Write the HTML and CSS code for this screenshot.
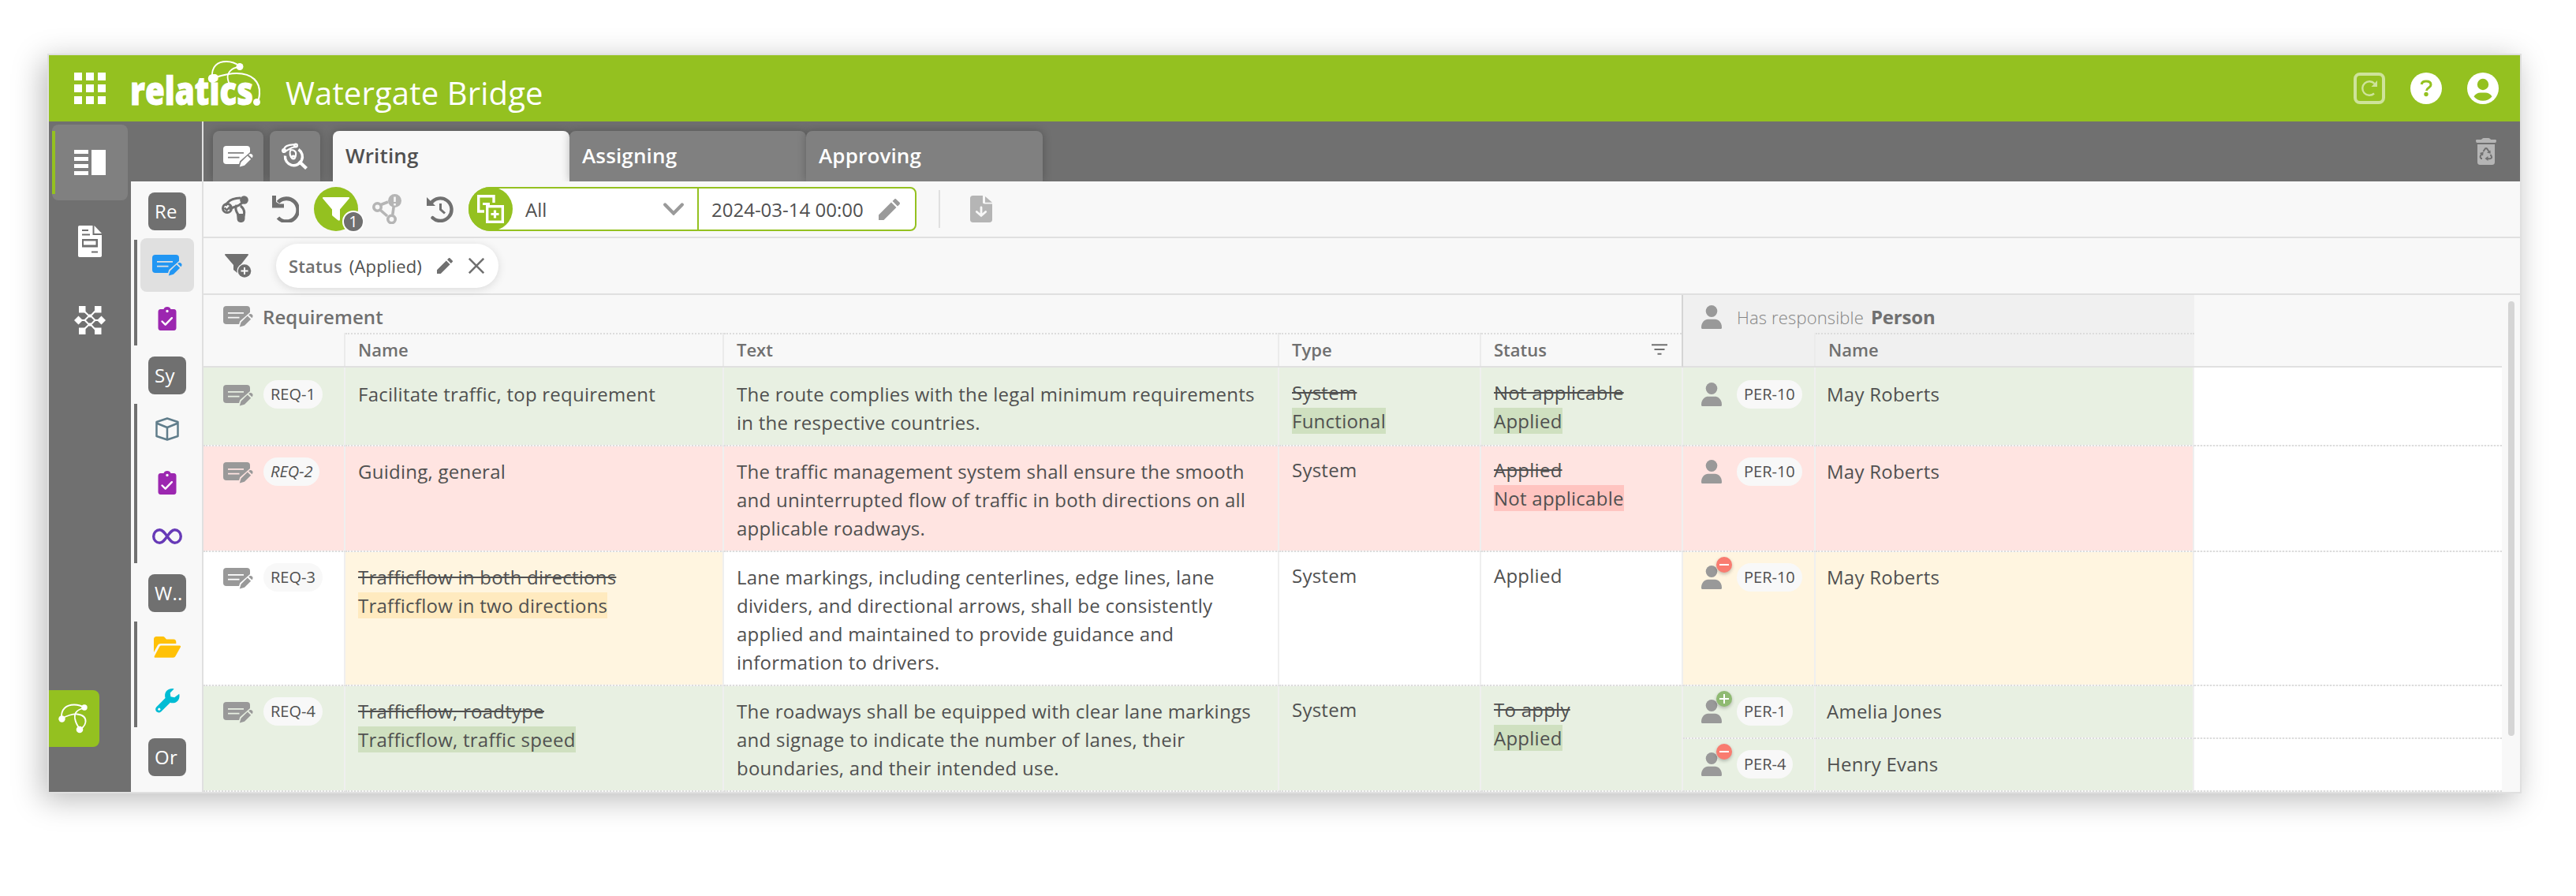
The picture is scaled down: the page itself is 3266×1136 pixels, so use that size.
FILE: index.html
```html
<!DOCTYPE html>
<html lang="en">
<head>
    <meta charset="UTF-8">
    <meta name="viewport" content="width=device-width, initial-scale=1.0">
    <title>Watergate Bridge</title>
    <link rel="stylesheet" href="styles.css">
</head>
<body>
    <!-- Shared icons -->
    <svg class="sprite" aria-hidden="true">
        <mask id="note-cut">
            <rect width="38" height="27" fill="#fff"/>
            <path d="M6 8.8H26M6 14.6H20.5" stroke="#000" stroke-width="1.8"/>
            <path d="M20.5 27l2-7L35 9l5 3-13 15z" fill="#000" stroke="#000" stroke-width="3"/>
        </mask>
        <symbol id="note" viewBox="0 0 38 27">
            <rect width="34" height="23" rx="4" fill="currentColor" mask="url(#note-cut)"/>
            <path d="M20.8 26.6l1.8-6.2 8.2-8 4.3 4.3-8.1 8.1zM32.2 11.2c1.5-1.6 3.2-1.6 4.4-.5 1.3 1.2 1.4 2.9-.2 4.6z" fill="currentColor"/>
        </symbol>
        <symbol id="person" viewBox="0 0 26 30">
            <ellipse cx="13" cy="7.5" rx="7.3" ry="7.5" fill="currentColor"/>
            <path d="M0 28C0 21.500 4.500 17.700 8.500 17.700H17.500C21.500 17.700 26 21.500 26 28C26 29.500 25.500 30 24.500 30H1.500C.5 30 0 29.500 0 28z" fill="currentColor"/>
        </symbol>
        <symbol id="clip" viewBox="0 0 24 30">
            <path fill-rule="evenodd" fill="currentColor" d="M3.500 3H7.500C8 1.200 9.800 0 12 0s4 1.200 4.500 3h4C22.500 3 23.500 4.500 23.500 6.500v20c0 2-1 3.500-3 3.500h-17c-2 0-3-1.500-3-3.500v-20C.5 4.500 1.500 3 3.500 3zM12 3.800a1.700 1.700 0 1 0 0 3.400 1.700 1.700 0 0 0 0-3.400z"/>
            <path d="M5.500 18.500l4.200 4.200 8.200-8.500" fill="none" stroke="#fff" stroke-width="2.400" stroke-linecap="round" stroke-linejoin="round"/>
        </symbol>
        <symbol id="pencil" viewBox="0 0 20 20">
            <path d="M0 20v-4.800L11.800 3.400l4.800 4.800L4.800 20zM13 2.200L14.900.3c.5-.4 1-.4 1.500 0l3.300 3.300c.4.500.4 1 0 1.500L17.800 7z" fill="currentColor"/>
        </symbol>
    </svg>

    <div class="app">
        <header class="header">
            <svg class="apps" viewBox="0 0 40 40" fill="#fff">
                <path d="M0 0h10v10H0zM15 0h10v10H15zM30 0h10v10H30zM0 15h10v10H0zM15 15h10v10H15zM30 15h10v10H30zM0 30h10v10H0zM15 30h10v10H15zM30 30h10v10H30z"/>
            </svg>
            <svg class="logo" viewBox="0 0 170 64">
                <text class="logo-text" x="-1" y="57" textLength="156" lengthAdjust="spacingAndGlyphs">relatics</text>
                <g fill="none" stroke="#fff" stroke-width="1.800">
                    <path d="M103 22C102 8 110 2 121 2c7 0 12 2 17 6"/>
                    <path d="M137 9c-10 1-16 8-14 16 1 6 4 9 8 11"/>
                    <path d="M104 23c10-3 18-6 30-6 20 0 30 11 29 26-.3 5-1 8-3 10" stroke-width="2.200"/>
                </g>
                <circle cx="103.300" cy="23.500" r="5.500" fill="#fff"/>
                <circle cx="138" cy="8.500" r="4.500" fill="#fff"/>
                <circle cx="159.500" cy="53.500" r="4.500" fill="#fff"/>
            </svg>
            <h1 class="title">Watergate Bridge</h1>
            <div class="header-icons">
                <svg class="icon-40" viewBox="0 0 40 40" opacity=".55">
                    <rect x="2" y="2" width="36" height="36" rx="6" fill="none" stroke="#fff" stroke-width="4"/>
                    <path d="M26 26.500A8.800 8.800 0 1 1 26.500 14" fill="none" stroke="#fff" stroke-width="2.400"/>
                    <path d="M30 10v8h-7.500z" fill="#fff"/>
                </svg>
                <svg class="icon-40" viewBox="0 0 40 40">
                    <circle cx="20" cy="20" r="20" fill="#fff"/>
                    <path d="M14.200 15c.3-3 2.500-4 5.800-4 4 0 6 1.700 6 4.400 0 3.900-5.500 3.700-5.500 7.600" fill="none" stroke="#94c120" stroke-width="3"/>
                    <circle cx="20" cy="27.500" r="2.700" fill="#94c120"/>
                </svg>
                <svg class="icon-40" viewBox="0 0 40 40">
                    <circle cx="20" cy="20" r="20" fill="#fff"/>
                    <circle cx="20" cy="15" r="7.200" fill="#94c120"/>
                    <path d="M8.500 30.500c2-3.500 5-5 8.500-5h6c3.500 0 6.500 1.500 8.500 5-3 3.500-7 5.200-11.500 5.200s-8.500-1.700-11.500-5.200z" fill="#94c120"/>
                </svg>
            </div>
        </header>

        <div class="body">
            <nav class="sidebar">
                <div class="side-item active">
                    <svg width="40" height="32" viewBox="0 0 40 32" fill="#fff"><path d="M0 0h18v5H0zM0 9h18v5H0zM0 18h18v5H0zM0 27h18v5H0zM22 0h18v32H22z"/></svg>
                </div>
                <div class="side-item">
                    <svg width="30" height="40" viewBox="0 0 30 40">
                        <path fill="#fff" fill-rule="evenodd" d="M2 0h16.500v12H30v26c0 1.300-.7 2-2 2H2c-1.300 0-2-.7-2-2V2C0 .7.700 0 2 0zM5 5v2h8V5zM5 10.500v2h10v-2zM5 17v10.500h20V17zm2 2.500h15.500v5H7zM17 32.500v2h8v-2zM20.500 0L30 10h-9.500z"/>
                    </svg>
                </div>
                <div class="side-item">
                    <svg width="40" height="36" viewBox="0 0 40 36">
                        <path d="M10 4l10 9.500 9-9.500M10 32l10-9.500 9 9.500M5 18h8.500L20 11.500l6.500 6.500H35M13.500 18l6.500 6.500 6.500-6.500" fill="none" stroke="#fff" stroke-width="2"/>
                        <path d="M6 0h8.500v8.500H6zM26 0h8.500v8.500H26zM6 27.500h8.500V36H6zM26 27.500h8.500V36H26zM0 18l5.500-5.500L11 18l-5.500 5.500zM29 18l5.500-5.500L40 18l-5.500 5.500z" fill="#fff"/>
                    </svg>
                </div>
                <div class="side-tab">
                    <svg width="38" height="38" viewBox="0 0 38 38">
                        <g fill="none" stroke="#fff" stroke-width="1.800">
                            <path d="M4 19C3 7 10 1.500 20 1.500c5 0 9 1 13 4"/>
                            <path d="M33 5.500C23 8 20 12 21 19c1 6 3 9 6 13"/>
                            <path d="M4 19c8-4 14-6 20-5.500 8 1 11 5 10.500 10-.5 5-3.500 6-6.500 10"/>
                        </g>
                        <circle cx="4.500" cy="19.500" r="4.200" fill="#fff"/>
                        <circle cx="33" cy="5" r="3.700" fill="#fff"/>
                        <circle cx="27" cy="33" r="4.300" fill="#fff"/>
                    </svg>
                </div>
            </nav>

            <nav class="subnav">
                <div class="label">Re</div>
                <div class="group">
                    <div class="sub-item selected"><svg class="note blue"><use href="#note"/></svg></div>
                    <div class="sub-item"><svg class="clip"><use href="#clip"/></svg></div>
                </div>
                <div class="label">Sy</div>
                <div class="group">
                    <div class="sub-item">
                        <svg width="32" height="30" viewBox="0 0 32 30" fill="none" stroke="#607d8b" stroke-width="2.500" stroke-linejoin="round"><path d="M16 1.500L29.500 6v18L16 28.500 2.500 24V6zM2.500 7.500L16 13l13.500-5.500M16 13v15.500"/></svg>
                    </div>
                    <div class="sub-item"><svg class="clip"><use href="#clip"/></svg></div>
                    <div class="sub-item">
                        <svg width="38" height="20" viewBox="0 0 38 20" fill="none" stroke="#673ab7" stroke-width="3.400"><path d="M19 10C15.500 5 13 1.700 9.500 1.700a7.800 8.300 0 0 0 0 16.600C13 18.300 15.500 15 19 10s6-8.300 9.500-8.300a7.800 8.300 0 0 1 0 16.600C25 18.300 22.500 15 19 10z"/></svg>
                    </div>
                </div>
                <div class="label">W..</div>
                <div class="group">
                    <div class="sub-item">
                        <svg width="34" height="27" viewBox="0 0 34 27" fill="#ffc107"><path d="M0 20V3.500C0 1.200 1.200 0 3.500 0h8c1 0 1.800.4 2.500 1.200l2 2.300h9c2.200 0 3.300 1.200 3.300 3.500V9H9C7 9 5.800 9.700 5 11zM1 24.500l6-11.300c.6-1.200 1.300-1.700 2.500-1.700h23c1.500 0 1.900.9 1.200 2.200l-6 10.800c-.8 1.500-1.700 2.200-3.200 2.200H2C.5 26.700.3 25.800 1 24.500z"/></svg>
                    </div>
                    <div class="sub-item">
                        <svg width="31" height="31" viewBox="0 0 31 31"><path d="M30.200 6.800c1.300 5-1.200 10.700-7 11.400-1.700.3-3 .1-4.300-.4L7.300 29.300c-4 3.500-9.200-1.200-6.300-5.600L12.600 12C10.300 5 16.200-1.300 23.600.4L18.700 5.500l.7 4.800 4.800 1z" fill="#00bcd4"/><circle cx="4.800" cy="26.200" r="1.600" fill="#f8f8f8"/></svg>
                    </div>
                </div>
                <div class="label">Or</div>
            </nav>

            <main class="main">
                <div class="tabs">
                    <div class="tab tab-icon"><svg class="note white"><use href="#note"/></svg></div>
                    <div class="tab tab-icon">
                        <svg width="34" height="34" viewBox="0 0 34 34" fill="none" stroke="#fff">
                            <path d="M4.500 16.500a11 11 0 1 0 17-8" stroke-width="3.400"/>
                            <path d="M22 23.500l9.500 9" stroke-width="4.200"/>
                            <path d="M2.500 10.500C3 5 8 1.500 18 2.500M4 11c4-1 6-5 14-6M12 8c-3 5-1 10 2 12M12 9c5 0 8 3 5 10" stroke-width="2.200"/>
                            <circle cx="3" cy="10" r="1.800" stroke-width="2.500"/><circle cx="18" cy="3.500" r="1.800" stroke-width="2.500"/><circle cx="15" cy="18.500" r="1.800" stroke-width="2.500"/>
                        </svg>
                    </div>
                    <div class="tab tab-text current">Writing</div>
                    <div class="tab tab-text">Assigning</div>
                    <div class="tab tab-text">Approving</div>
                    <svg class="trash" width="26" height="34" viewBox="0 0 26 34">
                        <path d="M0 3.500C0 2.500.6 2 1.500 2H7c1-1.400 2-2 4-2h4c2 0 3 .6 4 2h5.500c.9 0 1.500.5 1.500 1.500S25.400 6 24.500 6h-23C.6 6 0 4.500 0 3.500zM2 8h22v22.500c0 2.300-1 3.500-3.500 3.500h-15C3 34 2 32.800 2 30.500z" fill="#b5b5b5"/>
                        <path d="M9.500 17l2-3c1-1.200 2-1.200 3 0l2 3M6 26H8c-2 0-3-1.500-2-3.500l1.800-3M18.500 21l1.200 2c1 1.700 0 3.200-2 3.200h-4" fill="none" stroke="#707070" stroke-width="2"/>
                        <path d="M14 18.500l4.500-3 .2 4.200zM4.800 19l5-1.500-.8 5zM15.500 23v6l-4-3z" fill="#707070"/>
                    </svg>
                </div>

                <div class="toolbar">
                    <svg width="34" height="34" viewBox="0 0 34 34" fill="none" stroke="#707070" stroke-width="3">
                        <path d="M5 13C8 6 14 3 24 3M10 18c5-6 10-2 16-9M19 12c-3 6 1 10 3 14M24 13c5 4 6 9 3 15"/>
                        <circle cx="7" cy="16" r="5.500"/><path d="M3.500 15.500l3 3 5.500-6" stroke-width="2.500"/>
                        <circle cx="28.500" cy="5.500" r="5.300" fill="#707070" stroke="none"/><path d="M19 23h10.500v5.500c0 3.300-1.500 5.500-5 5.500s-5-2.200-5-5.500z" fill="#707070" stroke="none"/>
                    </svg>
                    <svg class="t-undo" width="34" height="34" viewBox="0 0 34 34">
                        <path d="M7.500 8.500A14.500 14.500 0 1 1 7.500 28" fill="none" stroke="#707070" stroke-width="4.800"/>
                        <path d="M0 0h5v8l4 2.500h6v5H0z" fill="#707070"/>
                    </svg>
                    <div class="filter-on">
                        <svg width="34" height="30" viewBox="0 0 34 30"><path d="M1 0h32c1.200 0 1.300 1 .7 1.800L22 15.500V28c0 2-1.500 2.300-2.800 1L13 24c-.7-.6-1-1-1-2v-6.500L.3 1.800C-.3 1-.2 0 1 0z" fill="#fff"/></svg>
                        <span class="count">1</span>
                    </div>
                    <svg class="t-link" width="37" height="38" viewBox="0 0 37 38" fill="none" stroke="#b5b5b5" stroke-width="3.600">
                        <path d="M11 13.500l9-3.500M10.500 20.500l8.500 7.500M25.800 26l1.500-11"/>
                        <circle cx="6.500" cy="16.500" r="4.700"/><circle cx="24.500" cy="32" r="4.700"/>
                        <circle cx="28.500" cy="8.500" r="8.500" fill="#b5b5b5" stroke="none"/><path d="M28.500 3.500v6.500M28.500 12v2.500" stroke="#f8f8f8" stroke-width="2.600"/>
                    </svg>
                    <svg class="t-history" width="34" height="34" viewBox="0 0 34 34" fill="none" stroke="#707070">
                        <path d="M5.500 9.500A14.300 14.300 0 1 1 7.500 28.200" stroke-width="4.400" stroke-linecap="round"/>
                        <path d="M0 2v11h11z" fill="#707070" stroke-width="0"/><path d="M17.500 10v7.500l5.500 5" stroke-width="3"/>
                    </svg>
                    <div class="combo">
                        <div class="combo-icon">
                            <svg width="34" height="36" viewBox="0 0 34 36" fill="none" stroke="#fff" stroke-width="3.400">
                                <path d="M21 10V1.700H1.700V21H9"/><path d="M7 11.500h9" stroke-width="3"/>
                                <rect x="12.700" y="14.700" width="19.600" height="19.600"/><path d="M17.500 24.500h10M22.500 19.500v10" stroke-width="3.200"/>
                            </svg>
                        </div>
                        <div class="combo-value">All
                            <svg width="26" height="16" viewBox="0 0 26 16" fill="none" stroke="#9a9a9a" stroke-width="4.200" stroke-linecap="round"><path d="M2.200 2.500L13 13.500l10.800-11"/></svg>
                        </div>
                        <div class="combo-date">2024-03-14 00:00 <svg class="pencil-lg"><use href="#pencil"/></svg></div>
                    </div>
                    <div class="separator"></div>
                    <svg width="28" height="34" viewBox="0 0 28 34">
                        <path d="M3.500 0H16v8c0 1.800.7 2.500 2.500 2.500H28v20c0 2-1.300 3.500-3.500 3.500h-21C1.300 34 0 32.500 0 30.500v-27C0 1.500 1.300 0 3.500 0zM19 1l9 7.700h-9z" fill="#b5b5b5"/>
                        <path d="M14 15v10M8.300 20.500l5.700 5 5.700-5" fill="none" stroke="#f8f8f8" stroke-width="2.800" stroke-linecap="round"/>
                    </svg>
                </div>

                <div class="filterbar">
                    <svg width="34" height="30" viewBox="0 0 34 30">
                        <path d="M1 0h28c1 0 1.200.8.700 1.600L20 14v11l-3.500-.5L11 20v-6L.3 1.600C-.2.8 0 0 1 0z" fill="#707070"/>
                        <circle cx="25" cy="21.500" r="9.500" fill="#f8f8f8"/><circle cx="25" cy="21.500" r="8.300" fill="#707070"/><path d="M20.500 21.500h9M25 17v9" stroke="#fff" stroke-width="1.900"/>
                    </svg>
                    <div class="chip"><b>Status</b><span>(Applied)</span>
                        <svg class="pencil-sm"><use href="#pencil"/></svg>
                        <svg width="20" height="20" viewBox="0 0 20 20" stroke="#707070" stroke-width="2.600"><path d="M.8.8l18.400 18.400M19.200.8L.8 19.200"/></svg>
                    </div>
                </div>

                <div class="content">
                    <div class="grid">
                        <div class="head-left">
                            <div class="head-title"><svg class="note"><use href="#note"/></svg>Requirement</div>
                            <div class="head-cols">
                                <div class="th"></div>
                                <div class="th dotted">Name</div>
                                <div class="th dotted">Text</div>
                                <div class="th dotted">Type</div>
                                <div class="th dotted last">Status
                                    <svg width="20" height="14" viewBox="0 0 20 14" stroke="#707070" stroke-width="2"><path d="M0 1.200h20M3.500 7h13M7.500 12.800h5"/></svg>
                                </div>
                            </div>
                        </div>
                        <div class="head-right">
                            <div class="head-title"><svg class="person"><use href="#person"/></svg><span class="relation">Has responsible</span><b>Person</b></div>
                            <div class="head-cols">
                                <div class="th"></div>
                                <div class="th dotted last">Name</div>
                            </div>
                        </div>
                        <div class="head-rest"></div>

                        <!-- REQ-1 -->
                        <div class="row row-1 green">
                            <div class="td id"><svg class="note"><use href="#note"/></svg><span class="pill">REQ-1</span></div>
                            <div class="td">Facilitate traffic, top requirement</div>
                            <div class="td">The route complies with the legal minimum requirements<br>in the respective countries.</div>
                            <div class="td choice"><s>System</s><br><mark>Functional</mark></div>
                            <div class="td choice"><s>Not applicable</s><br><mark>Applied</mark></div>
                            <div class="people">
                                <div class="person-row">
                                    <div class="td id"><svg class="person"><use href="#person"/></svg><span class="pill">PER-10</span></div>
                                    <div class="td">May Roberts</div>
                                    <div class="td rest"></div>
                                </div>
                            </div>
                        </div>

                        <!-- REQ-2 -->
                        <div class="row row-2 red">
                            <div class="td id"><svg class="note"><use href="#note"/></svg><span class="pill"><i>REQ-2</i></span></div>
                            <div class="td">Guiding, general</div>
                            <div class="td">The traffic management system shall ensure the smooth<br>and uninterrupted flow of traffic in both directions on all<br>applicable roadways.</div>
                            <div class="td choice">System</div>
                            <div class="td choice"><s>Applied</s><br><mark>Not applicable</mark></div>
                            <div class="people">
                                <div class="person-row">
                                    <div class="td id"><svg class="person"><use href="#person"/></svg><span class="pill">PER-10</span></div>
                                    <div class="td">May Roberts</div>
                                    <div class="td rest"></div>
                                </div>
                            </div>
                        </div>

                        <!-- REQ-3 -->
                        <div class="row row-3">
                            <div class="td id"><svg class="note"><use href="#note"/></svg><span class="pill">REQ-3</span></div>
                            <div class="td yellow"><s>Trafficflow in both directions</s><br><mark>Trafficflow in two directions</mark></div>
                            <div class="td">Lane markings, including centerlines, edge lines, lane<br>dividers, and directional arrows, shall be consistently<br>applied and maintained to provide guidance and<br>information to drivers.</div>
                            <div class="td choice">System</div>
                            <div class="td choice">Applied</div>
                            <div class="people">
                                <div class="person-row">
                                    <div class="td id yellow"><svg class="person"><use href="#person"/></svg><span class="badge minus"></span><span class="pill">PER-10</span></div>
                                    <div class="td yellow">May Roberts</div>
                                    <div class="td rest"></div>
                                </div>
                            </div>
                        </div>

                        <!-- REQ-4 -->
                        <div class="row row-4 green">
                            <div class="td id"><svg class="note"><use href="#note"/></svg><span class="pill">REQ-4</span></div>
                            <div class="td"><s>Trafficflow, roadtype</s><br><mark>Trafficflow, traffic speed</mark></div>
                            <div class="td">The roadways shall be equipped with clear lane markings<br>and signage to indicate the number of lanes, their<br>boundaries, and their intended use.</div>
                            <div class="td choice">System</div>
                            <div class="td choice"><s>To apply</s><br><mark>Applied</mark></div>
                            <div class="people">
                                <div class="person-row">
                                    <div class="td id"><svg class="person"><use href="#person"/></svg><span class="badge plus"></span><span class="pill">PER-1</span></div>
                                    <div class="td">Amelia Jones</div>
                                    <div class="td rest"></div>
                                </div>
                                <div class="person-row">
                                    <div class="td id"><svg class="person"><use href="#person"/></svg><span class="badge minus"></span><span class="pill">PER-4</span></div>
                                    <div class="td">Henry Evans</div>
                                    <div class="td rest"></div>
                                </div>
                            </div>
                        </div>
                    </div>
                    <div class="scroll"><div class="thumb"></div></div>
                </div>
            </main>
        </div>
    </div>
</body>
</html>
```
FILE: styles.css
```css
* { box-sizing: border-box; }
body { margin: 0; padding: 68px 69px 0 60px; height: 1136px; background: #fff; color: #505050; font-family: "Open Sans", sans-serif; font-size: 24px; overflow: hidden; }
svg { display: block; flex: none; }
.sprite { position: absolute; width: 0; height: 0; }

.app { width: 3137px; height: 938px; border: 2px solid #e0e0e0; box-shadow: -6px 8px 36px rgba(0, 0, 0, .27); }

/* header */
.header { display: flex; height: 84px; padding: 0 27px 0 32px; background: #94c120; color: #fff; }
.apps { width: 40px; height: 40px; margin-top: 22px; }
.logo { width: 170px; height: 64px; margin: 6px 0 0 32px; overflow: visible; }
.logo-text { font-size: 50px; font-weight: 800; fill: #fff; stroke: #fff; stroke-width: 1px; }
.title { margin: 21px 0 0 26px; font-size: 40px; font-weight: 400; line-height: 54px; letter-spacing: .15px; }
.header-icons { display: flex; gap: 32px; margin: 22px 0 0 auto; }
.icon-40 { width: 40px; height: 40px; }

.body { display: flex; height: 850px; }

/* left bar */
.sidebar { display: flex; flex-direction: column; gap: 4px; width: 104px; padding: 4px 4px 57px; background: #707070; }
.side-item { display: flex; align-items: center; justify-content: center; height: 96px; border-radius: 8px; }
.side-item.active { background: linear-gradient(#94c120, #94c120) 0 8px / 4px 80px no-repeat #808080; }
.side-tab { display: flex; align-items: center; width: 64px; height: 72px; margin: auto 0 0 -4px; padding-left: 12px; border-radius: 0 8px 8px 0; background: #94c120; }

.subnav { width: 92px; padding-top: 90px; border-right: 2px solid #e0e0e0; background: linear-gradient(#707070 76px, #f8f8f8 76px); }
.label { width: 48px; height: 48px; margin-left: 22px; padding: 0 4px 0 8px; border-radius: 8px; background: #707070; color: #fff; font-weight: 500; line-height: 48px; letter-spacing: .3px; overflow: hidden; white-space: nowrap; }
.group { margin: 10px 0 14px; padding-left: 12px; background: linear-gradient(#707070, #707070) 4px 2px / 4px calc(100% - 2px) no-repeat; }
.sub-item { display: flex; align-items: center; justify-content: center; width: 68px; height: 68px; border-radius: 8px; }
.selected { background: #e0e0e0; }
.note { width: 38px; height: 27px; color: #999; }
.blue { color: #2196f3; }
.white { color: #fff; }
.clip { width: 24px; height: 30px; color: #9c27b0; }
.person { width: 26px; height: 30px; color: #999; }

.main { display: flex; flex: 1; flex-direction: column; background: #f8f8f8; }

/* tabs */
.tabs { display: flex; align-items: flex-end; height: 76px; padding-left: 12px; background: #707070; overflow: hidden; }
.tab { display: flex; align-items: center; height: 64px; border-radius: 8px 8px 0 0; background: #808080; color: #fff; box-shadow: 0 0 12px rgba(0, 0, 0, .25); }
.tab-icon { justify-content: center; width: 64px; margin-right: 8px; }
.tab-text { width: 300px; padding: 0 0 3px 16px; font-size: 26px; font-weight: 600; letter-spacing: .15px; }
.current { margin-left: 8px; background: #f8f8f8; color: #505050; }
.trash { margin: 0 30px 21px auto; }

/* toolbar */
.toolbar { display: flex; align-items: center; height: 72px; padding: 0 0 0 23px; border-bottom: 2px solid #e0e0e0; }
.t-undo { margin-left: 30px; }
.filter-on { position: relative; display: flex; align-items: center; justify-content: center; width: 56px; height: 56px; margin-left: 19px; border-radius: 50%; background: #94c120; }
.count { position: absolute; left: 36px; top: 30px; width: 28px; height: 28px; border: 2px solid #fff; border-radius: 50%; background: #707070; color: #fff; font-size: 20px; line-height: 24px; text-align: center; }
.t-link { margin-left: 18px; }
.t-history { margin-left: 32px; }
.combo { display: flex; width: 568px; height: 56px; margin-left: 19px; border: 2px solid #94c120; border-radius: 28px 8px 8px 28px; background: #fff; }
.combo-icon { display: flex; align-items: center; justify-content: center; width: 56px; height: 56px; margin: -2px 0 0 -2px; border-radius: 50%; background: #94c120; }
.combo-value { display: flex; align-items: center; justify-content: space-between; width: 236px; padding: 0 17px 0 16px; border-right: 2px solid #94c120; }
.combo-date { display: flex; flex: 1; align-items: center; justify-content: space-between; padding: 0 19px 0 16px; }
.pencil-lg { width: 27px; height: 27px; color: #9a9a9a; }
.separator { width: 2px; height: 48px; margin: 0 38px 0 28px; background: #e0e0e0; }

.filterbar { display: flex; align-items: center; gap: 31px; height: 72px; padding-left: 27px; border-bottom: 2px solid #e0e0e0; }
.chip { display: flex; align-items: center; width: 282px; height: 56px; padding-left: 16px; border-radius: 28px; background: #fff; box-shadow: 0 2px 12px rgba(0, 0, 0, .12); font-size: 22px; letter-spacing: .15px; }
.chip b { margin-right: 9px; color: #707070; font-weight: 600; }
.pencil-sm { width: 20px; height: 20px; margin: 0 20px 0 19px; color: #707070; }

/* grid */
.content { display: flex; flex: 1; min-height: 0; }
.grid { display: grid; grid-template-columns: 1876px 648px 390px; grid-template-rows: 92px 100px 134px 170px 134px; width: 2914px; letter-spacing: .25px; }
.head-left, .head-right, .head-rest { border-bottom: 2px solid #e0e0e0; }
.head-left { border-right: 2px solid #d5d5d5; }
.head-right { background: #f0f0f0; }
.head-title { display: flex; align-items: center; height: 48px; padding: 7px 0 0 25px; color: #707070; font-weight: 600; letter-spacing: .1px; }
.head-title .note { margin-right: 12px; }
.head-right .head-title { padding-left: 23px; }
.head-title .person { margin-right: 19px; }
.head-title b { margin-left: 9px; font-weight: 700; letter-spacing: -.2px; }
.relation { color: #858585; font-size: 22px; font-weight: 300; letter-spacing: .15px; }
.head-cols { display: grid; grid-template-columns: 180px 480px 704px 256px 254px; height: 42px; }
.head-right .head-cols { grid-template-columns: 168px 480px; }
.th { display: flex; align-items: center; justify-content: space-between; padding: 0 18px 2px 16px; border-right: 2px solid #ebebeb; color: #707070; font-size: 22px; font-weight: 600; letter-spacing: 0; }
.dotted { border-top: 2px dotted #dcdcdc; }
.th.last { border-right: 0; }

.row { display: grid; grid-column: 1 / 4; grid-template-columns: 180px 480px 704px 256px 256px 1038px; }
.people { display: flex; flex-direction: column; }
.person-row { display: grid; flex: 1; grid-template-columns: 168px 480px 390px; }
.td { padding: 14px 0 0 16px; border-right: 2px solid #efefef; border-bottom: 2px dotted #dcdcdc; background: #fff padding-box; line-height: 36px; white-space: nowrap; }
.row-1 .td { padding-top: 16px; }
.td.choice { padding-top: 12px; }
.row-1 .td.choice { padding-top: 14px; }
.td.id { position: relative; display: flex; align-items: flex-start; padding-left: 25px; }
.person-row .td { padding-left: 14px; }
.person-row .td.id { padding-left: 23px; }
.td.id .note { margin: 6px 13px 0 0; }
.td.id .person { margin: 3px 19px 0 0; }
.pill { height: 36px; padding: 0 9px; border-radius: 18px; background: #f8f8f8; font-size: 20px; line-height: 36px; letter-spacing: 0; }
.green .td { background-color: #e8f0e2; }
.red .td { background-color: #ffe4e1; }
.td.yellow { background-color: #fff5e0; }
.row .td.rest { border-right: 0; background-color: #fff; }
s { text-decoration-thickness: 2px; }
mark { color: inherit; background: #cfe0c0; }
.red mark { background: #ffc4c0; }
.yellow mark { background: #ffeabf; }

.badge { position: absolute; left: 42px; top: 6px; width: 20px; height: 20px; border-radius: 50%; box-shadow: 0 2px 4px rgba(0, 0, 0, .25); }
.minus { background: linear-gradient(#fff, #fff) center / 12px 2px no-repeat #f97c70; }
.plus { background: linear-gradient(#fff, #fff) center / 12px 2px no-repeat, linear-gradient(#fff, #fff) center / 2px 12px no-repeat #8fba72; }

.scroll { flex: 1; padding: 8px 7px 0 8px; }
.thumb { width: 8px; height: 551px; border-radius: 4px; background: #d5d5d5; }
```
